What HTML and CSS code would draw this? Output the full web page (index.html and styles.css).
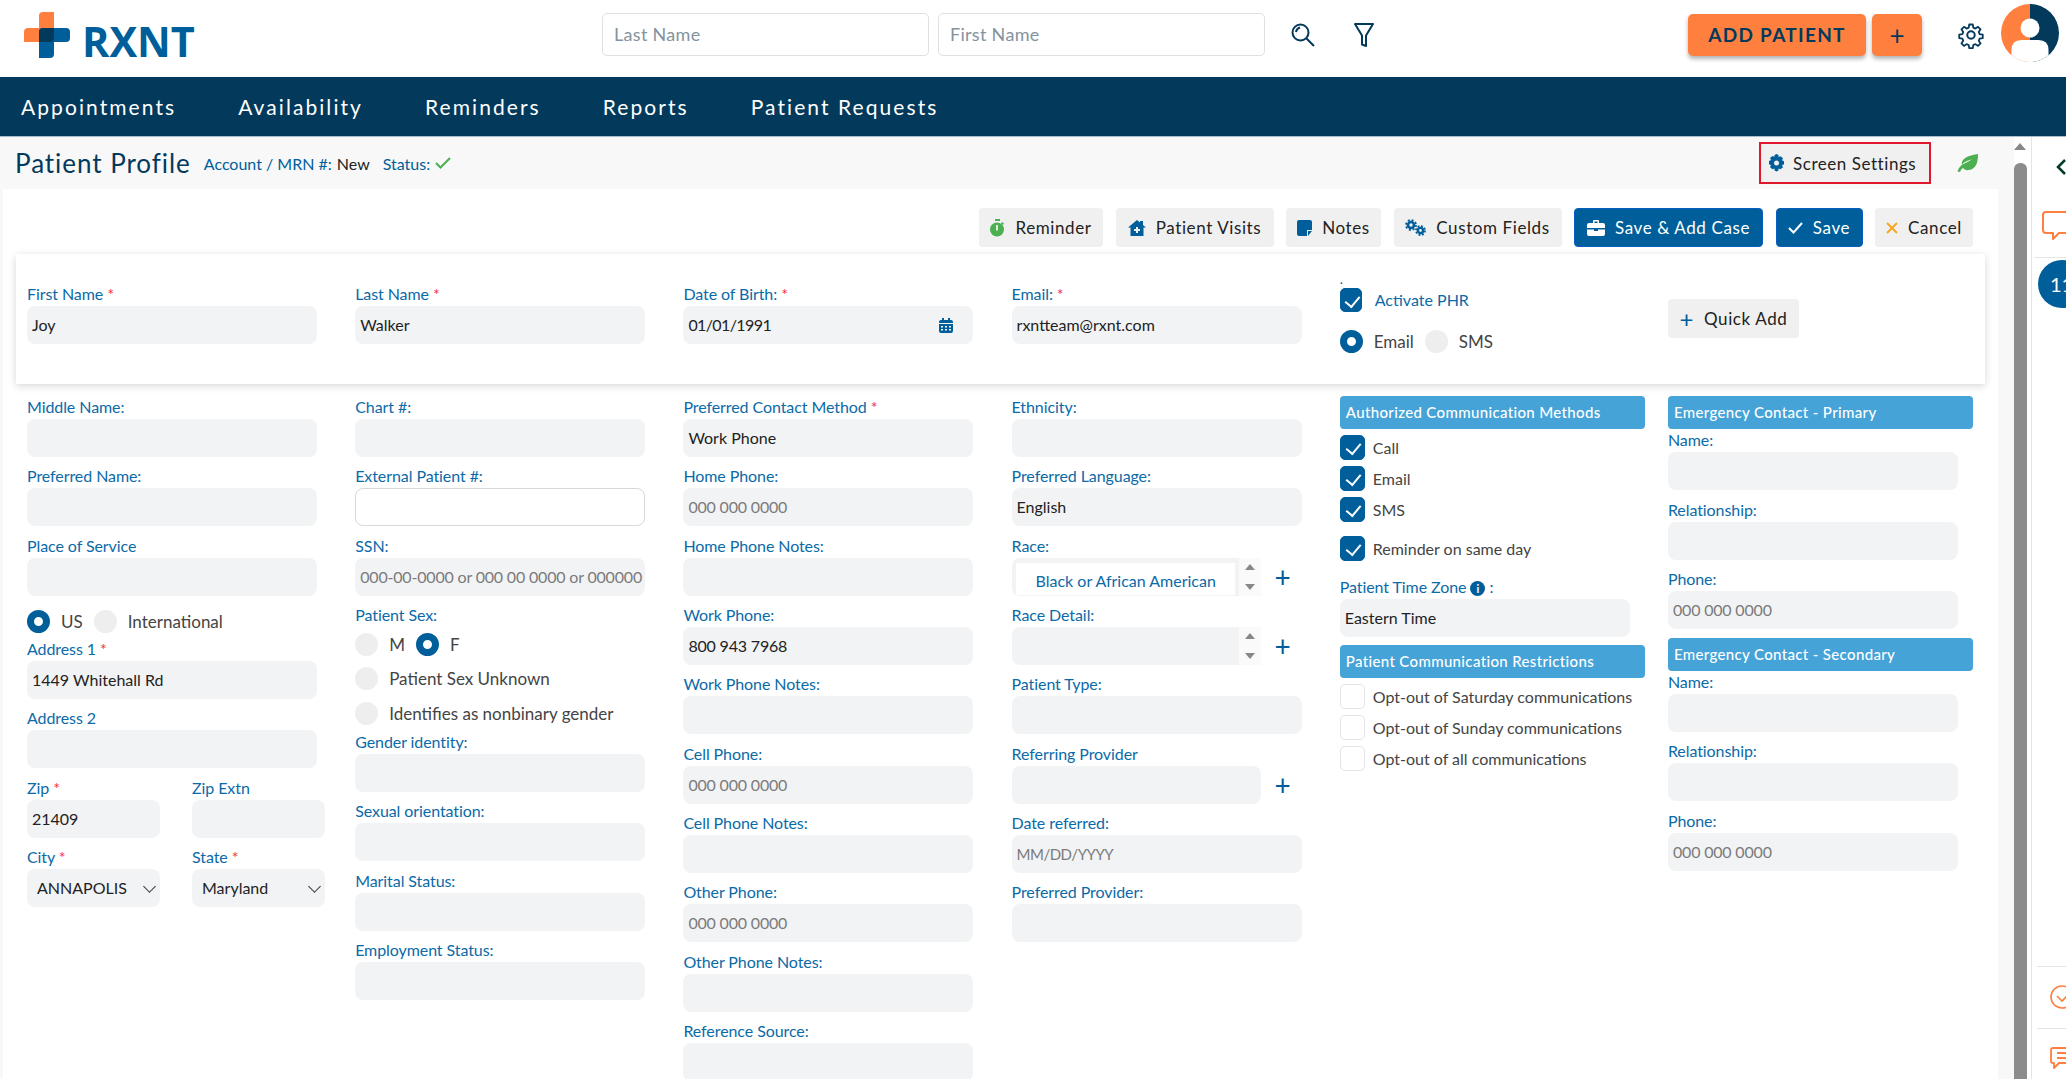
FILE: index.html
```html
<!DOCTYPE html>
<html lang="en">
<head>
  <meta charset="UTF-8" />
  <title>Patient Profile</title>
  <link rel="stylesheet" href="styles.css">
</head>
<body>

  <header class="topbar">
    <div class="logo">
      <svg width="46" height="46" viewBox="0 0 46 46">
        <path d="M15 16V4q0-4 4-4h11v26q0 4-4 4H0V20q0-4 4-4z" fill="#ff7f3f"/>
        <path d="M19 16h23q4 0 4 4v6q0 4-4 4H30v12q0 4-4 4H15V20q0-4 4-4z" fill="#005f9a"/>
        <path d="M19 16h11v10q0 4-4 4H15V20q0-4 4-4z" fill="#033a5c"/>
      </svg>
      <span class="logo-text">RXNT</span>
    </div>
    <div class="search">
      <div class="search-box">Last Name</div>
      <div class="search-box">First Name</div>
    </div>
    <svg class="search-icon" width="26" height="26" viewBox="0 0 26 26" fill="none" stroke="#033a5c" stroke-width="2">
      <circle cx="10.500" cy="10.500" r="8"/>
      <path d="M16.500 16.500l7.500 7.500M6 10q.5-3.500 4-4.500"/>
    </svg>
    <svg class="filter-icon" width="22" height="26" viewBox="0 0 22 26" fill="none" stroke="#033a5c" stroke-width="2" stroke-linejoin="round">
      <path d="M2 2h18l-7 11.500V24l-4-1.500v-9z"/>
    </svg>
    <button class="add-btn">ADD PATIENT</button>
    <button class="add-btn plus">+</button>
    <svg class="gear" width="28" height="28" viewBox="0 0 24 24" fill="none" stroke="#033a5c" stroke-width="1.700" stroke-linejoin="round">
      <circle cx="12" cy="12" r="3.200"/>
      <path d="M10.300 2h3.400l.5 3 2 .9 2.500-1.700 2.400 2.400-1.700 2.500.8 2 3 .5v3.400l-3 .5-.8 2 1.700 2.500-2.400 2.400-2.500-1.700-2 .8-.5 3h-3.400l-.5-3-2-.8-2.500 1.700-2.400-2.400 1.700-2.500-.8-2-3-.5v-3.400l3-.5.8-2-1.700-2.500 2.400-2.400 2.500 1.700 2-.9z" transform="translate(1.200 1.200) scale(.9)"/>
    </svg>
    <svg class="avatar" width="58" height="58" viewBox="0 0 58 58">
      <defs><clipPath id="round"><circle cx="29" cy="29" r="29"/></clipPath></defs>
      <g clip-path="url(#round)">
        <rect width="29" height="58" fill="#ff7f3f"/>
        <rect x="29" width="29" height="58" fill="#033a5c"/>
        <circle cx="29" cy="24" r="9.500" fill="#fff"/>
        <path d="M10.500 58V46q0-10 10-10h17q10 0 10 10v12z" fill="#fff"/>
      </g>
    </svg>
  </header>

  <nav class="nav">
    <a>Appointments</a>
    <a>Availability</a>
    <a>Reminders</a>
    <a>Reports</a>
    <a>Patient Requests</a>
  </nav>

  <div class="main">
    <div class="content">
      <div class="page-head">
        <h1>Patient Profile</h1>
        <span class="meta">Account / MRN #: <b>New</b></span>
        <span class="meta">Status:
          <svg width="16" height="12" viewBox="0 0 16 12" fill="none" stroke="#4caf50" stroke-width="2"><path d="M1 6l4.500 4.500L15 1"/></svg>
        </span>
        <button class="screen-btn">
          <svg width="17" height="18" viewBox="0 0 17 18"><path d="M8.500 0l2 1v2l2-.8 2.500 2-1 2 2 1v3l-2 1 1 2-2.500 2-2-.8v2l-2 1-2-1v-2l-2 .8-2.500-2 1-2-2-1V7l2-1-1-2 2.500-2 2 .8V1z" fill="#005f9a"/><circle cx="8.500" cy="9" r="2.500" fill="#f0f0f0"/></svg>
          Screen Settings
        </button>
        <svg class="leaf" width="22" height="19" viewBox="0 0 22 19"><path d="M21 0C21 9 19 15 12 16C9 16.500 7 15.500 6 14C4.500 15 3.500 16.500 3 18L.5 17.500C1.500 14 3.500 11.500 6.500 10C9 8.700 12 7.500 15 5C11 7 7 7.500 5 11C3.500 6 9 1.500 21 0Z" fill="#4caf50"/></svg>
      </div>

      <div class="panel">
        <div class="toolbar">
          <button class="btn w-reminder">
            <svg width="15" height="18" viewBox="0 0 15 18"><path d="M5 0h5v2H5zM12 3l2 1.500-1 1.500-2-1.500z" fill="#4caf50"/><circle cx="7" cy="10.500" r="7" fill="#4caf50"/><path d="M6.200 6h1.600v5.500H6.200z" fill="#fff"/></svg>
            Reminder
          </button>
          <button class="btn w-visits">
            <svg width="18" height="16" viewBox="0 0 18 16"><path d="M9 0l3 2.500V1h3v4l3 2.500h-2.500V16h-13V7.500H0z" fill="#005f9a"/><path d="M8 7h2v2h2v2h-2v2H8v-2H6V9h2z" fill="#f0f0f0"/></svg>
            Patient Visits
          </button>
          <button class="btn w-notes">
            <svg width="15" height="16" viewBox="0 0 15 16"><path d="M2 0h11q2 0 2 2v8h-5v6H2q-2 0-2-2V2q0-2 2-2zM11 11h4l-4 5z" fill="#005f9a"/></svg>
            Notes
          </button>
          <button class="btn w-custom">
            <svg width="21" height="17" viewBox="0 0 21 17" fill="none" stroke="#005f9a"><circle cx="6" cy="6" r="3" stroke-width="2.600"/><circle cx="6" cy="6" r="5" stroke-width="1.800" stroke-dasharray="2 1.930"/><circle cx="15.500" cy="11.500" r="2.600" stroke-width="2.400"/><circle cx="15.500" cy="11.500" r="4.500" stroke-width="1.800" stroke-dasharray="1.900 1.630"/></svg>
            Custom Fields
          </button>
          <button class="btn primary w-case">
            <svg width="18" height="16" viewBox="0 0 18 16"><path d="M6 3V1q0-1 1-1h4q1 0 1 1v2h4q2 0 2 2v3H0V5q0-2 2-2zm1.500 0h3V1.500h-3zM0 9.500h7V11h4V9.500h7V14q0 2-2 2H2q-2 0-2-2z" fill="#fff"/></svg>
            Save &amp; Add Case
          </button>
          <button class="btn primary w-save">
            <svg width="15" height="12" viewBox="0 0 15 12" fill="none" stroke="#fff" stroke-width="2"><path d="M1 6l4.500 4.500L14 1"/></svg>
            Save
          </button>
          <button class="btn w-cancel">
            <svg width="12" height="12" viewBox="0 0 12 12" fill="none" stroke="#f5a623" stroke-width="2"><path d="M1 1l10 10M11 1L1 11"/></svg>
            Cancel
          </button>
        </div>

        <div class="top-card">
          <div class="field"><label>First Name <i>*</i></label><div class="inp">Joy</div></div>
          <div class="field"><label>Last Name <i>*</i></label><div class="inp">Walker</div></div>
          <div class="field"><label>Date of Birth: <i>*</i></label>
            <div class="inp dob"><span>01/01/1991</span>
              <svg width="14" height="15" viewBox="0 0 14 15"><path d="M3 0h2v2h4V0h2v2h1q2 0 2 2v1H0V4q0-2 2-2h1zM0 6h14v7q0 2-2 2H2q-2 0-2-2z" fill="#005f9a"/><path d="M2 8h2v1.500H2zM6 8h2v1.500H6zM10 8h2v1.500h-2zM2 11h2v1.500H2zM6 11h2v1.500H6zM10 11h2v1.500h-2z" fill="#f2f3f5"/></svg>
            </div>
          </div>
          <div class="field"><label>Email: <i>*</i></label><div class="inp">rxntteam@rxnt.com</div></div>
          <div class="phr">
            <span class="dot">.</span>
            <div class="check-row phr-check"><span class="check on small"></span><span class="phr-label">Activate PHR</span></div>
            <div class="radio-row phr-radio"><span class="radio on"></span><span>Email</span><span class="radio"></span><span>SMS</span></div>
          </div>
          <div class="quick"><button class="btn quick-btn"><span class="quick-plus">+</span> Quick Add</button></div>
        </div>

        <div class="cols">
          <div class="col">
            <div class="field"><label>Middle Name:</label><div class="inp"></div></div>
            <div class="field"><label>Preferred Name:</label><div class="inp"></div></div>
            <div class="field"><label>Place of Service</label><div class="inp"></div></div>
            <div class="radio-row country"><span class="radio on"></span><span>US</span><span class="radio"></span><span>International</span></div>
            <div class="field"><label>Address 1 <i>*</i></label><div class="inp">1449 Whitehall Rd</div></div>
            <div class="field"><label>Address 2</label><div class="inp"></div></div>
            <div class="pair">
              <div class="field"><label>Zip <i>*</i></label><div class="inp">21409</div></div>
              <div class="field"><label>Zip Extn</label><div class="inp"></div></div>
            </div>
            <div class="pair">
              <div class="field"><label>City <i>*</i></label><div class="inp select">ANNAPOLIS</div></div>
              <div class="field"><label>State <i>*</i></label><div class="inp select">Maryland</div></div>
            </div>
          </div>

          <div class="col">
            <div class="field"><label>Chart #:</label><div class="inp"></div></div>
            <div class="field"><label>External Patient #:</label><div class="inp blank"></div></div>
            <div class="field"><label>SSN:</label><div class="inp hint">000-00-0000 or 000 00 0000 or 000000</div></div>
            <label class="sex-label">Patient Sex:</label>
            <div class="radio-row sex"><span class="radio"></span><span>M</span><span class="radio on"></span><span>F</span></div>
            <div class="radio-row sex"><span class="radio"></span><span>Patient Sex Unknown</span></div>
            <div class="radio-row sex"><span class="radio"></span><span>Identifies as nonbinary gender</span></div>
            <div class="field"><label>Gender identity:</label><div class="inp"></div></div>
            <div class="field"><label>Sexual orientation:</label><div class="inp"></div></div>
            <div class="field"><label>Marital Status:</label><div class="inp"></div></div>
            <div class="field"><label>Employment Status:</label><div class="inp"></div></div>
          </div>

          <div class="col">
            <div class="field"><label>Preferred Contact Method <i>*</i></label><div class="inp">Work Phone</div></div>
            <div class="field"><label>Home Phone:</label><div class="inp hint">000 000 0000</div></div>
            <div class="field"><label>Home Phone Notes:</label><div class="inp"></div></div>
            <div class="field"><label>Work Phone:</label><div class="inp phone">800 943 7968</div></div>
            <div class="field"><label>Work Phone Notes:</label><div class="inp"></div></div>
            <div class="field"><label>Cell Phone:</label><div class="inp hint">000 000 0000</div></div>
            <div class="field"><label>Cell Phone Notes:</label><div class="inp"></div></div>
            <div class="field"><label>Other Phone:</label><div class="inp hint">000 000 0000</div></div>
            <div class="field"><label>Other Phone Notes:</label><div class="inp"></div></div>
            <div class="field"><label>Reference Source:</label><div class="inp"></div></div>
          </div>

          <div class="col">
            <div class="field"><label>Ethnicity:</label><div class="inp"></div></div>
            <div class="field"><label>Preferred Language:</label><div class="inp">English</div></div>
            <div class="field"><label>Race:</label>
              <div class="picker-row">
                <div class="picker"><div class="picked">Black or African American</div><span class="spin"></span></div>
                <span class="add-link">+</span>
              </div>
            </div>
            <div class="field"><label>Race Detail:</label>
              <div class="picker-row">
                <div class="picker"><div class="picked none"></div><span class="spin"></span></div>
                <span class="add-link">+</span>
              </div>
            </div>
            <div class="field"><label>Patient Type:</label><div class="inp"></div></div>
            <div class="field"><label>Referring Provider</label>
              <div class="picker-row">
                <div class="inp short"></div>
                <span class="add-link">+</span>
              </div>
            </div>
            <div class="field"><label>Date referred:</label><div class="inp hint date">MM/DD/YYYY</div></div>
            <div class="field"><label>Preferred Provider:</label><div class="inp"></div></div>
          </div>

          <div class="col">
            <div class="band">Authorized Communication Methods</div>
            <div class="check-row"><span class="check on"></span>Call</div>
            <div class="check-row"><span class="check on"></span>Email</div>
            <div class="check-row"><span class="check on"></span>SMS</div>
            <div class="check-row same-day"><span class="check on"></span>Reminder on same day</div>
            <div class="field tz"><label>Patient Time Zone <span class="info">i</span> :</label><div class="inp">Eastern Time</div></div>
            <div class="band">Patient Communication Restrictions</div>
            <div class="check-row"><span class="check"></span>Opt-out of Saturday communications</div>
            <div class="check-row"><span class="check"></span>Opt-out of Sunday communications</div>
            <div class="check-row"><span class="check"></span>Opt-out of all communications</div>
          </div>

          <div class="col contact">
            <div class="band">Emergency Contact - Primary</div>
            <div class="field"><label>Name:</label><div class="inp"></div></div>
            <div class="field"><label>Relationship:</label><div class="inp"></div></div>
            <div class="field last"><label>Phone:</label><div class="inp hint">000 000 0000</div></div>
            <div class="band">Emergency Contact - Secondary</div>
            <div class="field"><label>Name:</label><div class="inp"></div></div>
            <div class="field"><label>Relationship:</label><div class="inp"></div></div>
            <div class="field"><label>Phone:</label><div class="inp hint">000 000 0000</div></div>
          </div>
        </div>
      </div>
    </div>

    <div class="scrollbar">
      <span class="scroll-up"></span>
      <span class="scroll-thumb"></span>
    </div>

    <aside class="side">
      <svg class="side-chevron" width="12" height="18" viewBox="0 0 12 18" fill="none" stroke="#033a2c" stroke-width="2.500"><path d="M10 2L3 9l7 7"/></svg>
      <div class="side-chat">
        <svg width="30" height="30" viewBox="0 0 30 30" fill="none" stroke="#ff7f3f" stroke-width="2" stroke-linejoin="round"><path d="M4 1h22q3 0 3 3v15q0 3-3 3h-4l-2 0-3 0-6 6v-6H4q-3 0-3-3V4q0-3 3-3z"/></svg>
      </div>
      <div class="side-count">11</div>
      <div class="side-low low-check">
        <svg width="24" height="24" viewBox="0 0 24 24" fill="none" stroke="#ff7f3f" stroke-width="1.600"><circle cx="12" cy="12" r="11"/><path d="M7 11l5 5 5-5"/></svg>
      </div>
      <div class="side-low low-msg">
        <svg width="26" height="22" viewBox="0 0 26 22" fill="none" stroke="#ff7f3f" stroke-width="1.800" stroke-linejoin="round"><path d="M3 1h21v15H9l-5 5v-5H3q-2 0-2-2V3q0-2 2-2zM7 6h17M7 11h17"/></svg>
      </div>
    </aside>
  </div>

</body>
</html>
```

FILE: styles.css
```css
* {
  box-sizing: border-box;
}

html, body {
  margin: 0;
  height: 1079px;
  overflow: hidden;
}

body {
  font-family: Lato, "Noto Sans", sans-serif;
  font-size: 16px;
  color: #222;
  background: #fff;
}

button {
  font-family: inherit;
  border: none;
  cursor: pointer;
}

.topbar {
  display: flex;
  align-items: center;
  height: 77px;
  padding-bottom: 8px;
  background: #fff;
}

.logo {
  display: flex;
  align-items: flex-end;
  gap: 12px;
  width: 602px;
  padding-left: 24px;
}

.logo-text {
  font-family: "Open Sans", sans-serif;
  font-size: 41.500px;
  font-weight: 700;
  color: #005f9a;
  line-height: 30px;
  height: 32px;
}

.search {
  display: flex;
  gap: 9px;
}

.search-box {
  width: 327px;
  height: 43px;
  padding: 0 11px;
  line-height: 41px;
  font-size: 18px;
  letter-spacing: 0.300px;
  color: #84939e;
  border: 1px solid #e0e0e0;
  border-radius: 5px;
}

.search-icon {
  margin-left: 25px;
}

.filter-icon {
  margin-left: 37px;
  margin-right: 313px;
}

.add-btn {
  width: 178px;
  height: 42px;
  background: #ff7f3f;
  color: #033a5c;
  font-size: 19px;
  font-weight: 700;
  letter-spacing: 1.300px;
  border-radius: 5px;
  box-shadow: 0 3px 4px rgba(0,0,0,0.3);
}

.add-btn.plus {
  width: 50px;
  margin-left: 6px;
  font-size: 26px;
  font-weight: 400;
  letter-spacing: 0;
  padding: 0;
}

.gear {
  margin-left: 35px;
}

.avatar {
  margin: -4px 0 0 16px;
}

.nav {
  display: flex;
  align-items: center;
  gap: 62px;
  height: 60px;
  padding-left: 21px;
  background: #033a5c;
  border-bottom: 1px solid #a9bccb;
}

.nav a {
  color: #fff;
  font-size: 21px;
  letter-spacing: 2.070px;
}

.main {
  display: flex;
  height: 942px;
}

.content {
  width: 2014px;
  background: #f8f8f8;
  overflow: hidden;
}

.page-head {
  display: flex;
  align-items: center;
  height: 52px;
  padding-left: 15px;
}

.page-head h1 {
  margin: 0 13px 0 0;
  font-size: 26px;
  font-weight: 400;
  letter-spacing: 0.950px;
  color: #033a5c;
}

.meta {
  display: flex;
  align-items: center;
  gap: 5px;
  margin-right: 13px;
  color: #005f9a;
}

.meta b {
  font-weight: 400;
  color: #222;
}

.screen-btn {
  display: flex;
  align-items: center;
  gap: 8px;
  width: 172px;
  height: 42px;
  margin-left: auto;
  padding: 0 0 0 7px;
  font-size: 17px;
  letter-spacing: 0.550px;
  color: #222;
  background: #f0f0f0;
  border: 2px solid #e0182d;
}

.leaf {
  margin: 0 35px 0 26px;
}

.panel {
  width: 1995px;
  height: 890px;
  margin-left: 3px;
  background: #fff;
  overflow: hidden;
}

.toolbar {
  display: flex;
  justify-content: flex-end;
  gap: 12.500px;
  padding: 19px 25px 0 0;
  height: 65px;
}

.btn {
  display: flex;
  align-items: center;
  justify-content: center;
  gap: 10px;
  height: 39px;
  font-size: 17px;
  letter-spacing: 0.600px;
  color: #222;
  background: #f0f0f0;
  border-radius: 4px;
}

.btn.primary {
  background: #005f9a;
  color: #fff;
  border: 1px solid #0a5ec0;
}

.w-reminder { width: 124px; }
.w-visits { width: 158px; }
.w-notes { width: 95px; }
.w-custom { width: 168px; }
.w-case { width: 189px; }
.w-save { width: 87px; }
.w-cancel { width: 98px; }

.top-card {
  display: grid;
  grid-template-columns: repeat(6, 290px);
  column-gap: 38.200px;
  width: 1969px;
  height: 130px;
  margin-left: 13px;
  padding: 29px 0 0 11px;
  background: #fff;
  box-shadow: 0 2px 8px rgba(0,0,0,0.16);
}

.field {
  margin-bottom: 8.330px;
}

.field label,
.sex-label {
  display: block;
  height: 23px;
  line-height: 22px;
  font-size: 16px;
  letter-spacing: -0.080px;
  color: #0b6aa8;
  white-space: nowrap;
}

.field label i {
  font-style: normal;
  color: #f0313c;
}

.inp {
  height: 38px;
  padding: 0 5px;
  line-height: 38px;
  background: #f2f3f5;
  border-radius: 8px;
  white-space: nowrap;
  overflow: hidden;
  color: #222;
}

.inp.blank {
  background: #fff;
  border: 1px solid #d5d8dc;
}

.inp.hint {
  color: #7b7b7b;
  letter-spacing: -0.180px;
}

.inp.phone {
  letter-spacing: -0.180px;
}

.inp.date {
  font-size: 15px;
  letter-spacing: -0.500px;
}

.inp.short {
  width: 249px;
}

.inp.dob {
  display: flex;
  align-items: center;
  justify-content: space-between;
  padding-right: 20px;
}

.inp.dob span {
  letter-spacing: -0.600px;
}

.inp.select {
  position: relative;
  padding-left: 10px;
}

.inp.select::after {
  content: "";
  position: absolute;
  top: 13px;
  right: 6px;
  width: 8px;
  height: 8px;
  border-right: 1.500px solid #333;
  border-bottom: 1.500px solid #333;
  transform: rotate(45deg);
}

.phr {
  position: relative;
  padding-top: 1px;
}

.dot {
  position: absolute;
  top: -12px;
  left: 0;
  color: #005f9a;
  font-size: 13px;
}

.quick {
  padding-top: 16px;
}

.quick-btn {
  width: 131px;
}

.quick-plus {
  font-size: 24px;
  line-height: 20px;
  color: #005f9a;
}

.cols {
  display: grid;
  grid-template-columns: repeat(6, 290px);
  column-gap: 38.200px;
  margin: 12px 0 0 24px;
}

.radio-row {
  display: flex;
  align-items: center;
  gap: 11px;
  font-size: 17px;
  color: #444;
  white-space: nowrap;
}

.radio {
  flex: none;
  width: 23px;
  height: 23px;
  border-radius: 50%;
  background: #eee;
}

.radio.on {
  background: #fff;
  border: 7px solid #005f9a;
}

.country {
  height: 34px;
  padding-top: 1px;
}

.sex {
  height: 34.670px;
}

.phr-radio {
  margin-top: 14.500px;
}

.pair {
  display: flex;
  gap: 32px;
  width: 298px;
}

.pair .field {
  width: 133px;
  margin-bottom: 8px;
}

.picker-row {
  display: flex;
  align-items: center;
  gap: 14px;
}

.picker {
  display: flex;
  width: 249px;
  height: 38px;
  padding: 5px 0 1px 4px;
  background: #f2f3f5;
  border-radius: 8px;
}

.picked {
  width: 219px;
  padding-left: 20px;
  line-height: 36px;
  background: #fff;
  color: #0b6aa8;
  white-space: nowrap;
}

.picked.none {
  background: transparent;
}

.spin {
  position: relative;
  width: 22px;
  margin: -5px 0 -1px 4px;
  background: #fafafa;
}

.spin::before,
.spin::after {
  content: "";
  position: absolute;
  left: 6px;
  border-left: 5px solid transparent;
  border-right: 5px solid transparent;
}

.spin::before {
  top: 6px;
  border-bottom: 6px solid #888;
}

.spin::after {
  bottom: 6px;
  border-top: 6px solid #888;
}

.add-link {
  font-size: 28px;
  line-height: 28px;
  color: #005f9a;
}

.band {
  width: 305px;
  height: 33px;
  margin-bottom: 3px;
  padding-left: 6px;
  line-height: 33px;
  font-size: 15px;
  font-weight: 500;
  letter-spacing: 0.350px;
  color: #fff;
  background: #45a3d8;
  border-radius: 4px;
}

.check-row {
  display: flex;
  align-items: center;
  gap: 8px;
  height: 31px;
  color: #444;
  white-space: nowrap;
}

.check {
  position: relative;
  flex: none;
  width: 25px;
  height: 25px;
  background: #fff;
  border: 1px solid #e2e4e7;
  border-radius: 5px;
}

.check.on {
  background: #005f9a;
  border-color: #005f9a;
}

.check.on::after {
  content: "";
  position: absolute;
  top: 4px;
  left: 8px;
  width: 7px;
  height: 12px;
  border-right: 2.500px solid #fff;
  border-bottom: 2.500px solid #fff;
  transform: rotate(40deg);
}

.check.small {
  width: 22px;
  height: 24px;
}

.check.small::after {
  left: 7px;
}

.phr-check {
  gap: 13px;
}

.phr-label {
  color: #0b6aa8;
}

.same-day {
  height: 37px;
  margin-top: 5px;
}

.tz {
  margin-top: 9px;
}

.info {
  display: inline-block;
  width: 15px;
  height: 15px;
  line-height: 15px;
  text-align: center;
  font-size: 11px;
  font-weight: 700;
  color: #fff;
  background: #005f9a;
  border-radius: 50%;
}

.contact .field {
  margin-bottom: 8.500px;
}

.contact .band {
  margin-bottom: 0;
}

.scrollbar {
  position: relative;
  width: 18px;
  background: #fff;
  border-right: 1px solid #e5e5e5;
}

.scroll-up {
  position: absolute;
  top: 6px;
  left: 0;
  border-left: 6.500px solid transparent;
  border-right: 6.500px solid transparent;
  border-bottom: 7px solid #888;
}

.scroll-thumb {
  position: absolute;
  top: 26px;
  bottom: 0;
  left: 0;
  width: 13px;
  background: #8c8c8c;
  border-radius: 6px 6px 0 0;
}

.side {
  position: relative;
  flex: 1;
  overflow: hidden;
  background: #fff;
}

.side-chevron {
  position: absolute;
  top: 21px;
  left: 23px;
}

.side-chat {
  position: absolute;
  top: 74px;
  left: 2px;
  width: 40px;
  padding: 0 0 13px 8px;
  border-bottom: 1px solid #e5e5e5;
}

.side-count {
  position: absolute;
  top: 123px;
  left: 6px;
  width: 48px;
  height: 48px;
  padding-left: 12px;
  line-height: 48px;
  font-size: 20px;
  color: #fff;
  background: #005f9a;
  border-radius: 50%;
}

.side-low {
  position: absolute;
  left: 5px;
  width: 40px;
  padding: 18px 0 0 13px;
  border-top: 1px solid #e5e5e5;
}

.low-check {
  top: 829px;
}

.low-msg {
  top: 891px;
}
```
